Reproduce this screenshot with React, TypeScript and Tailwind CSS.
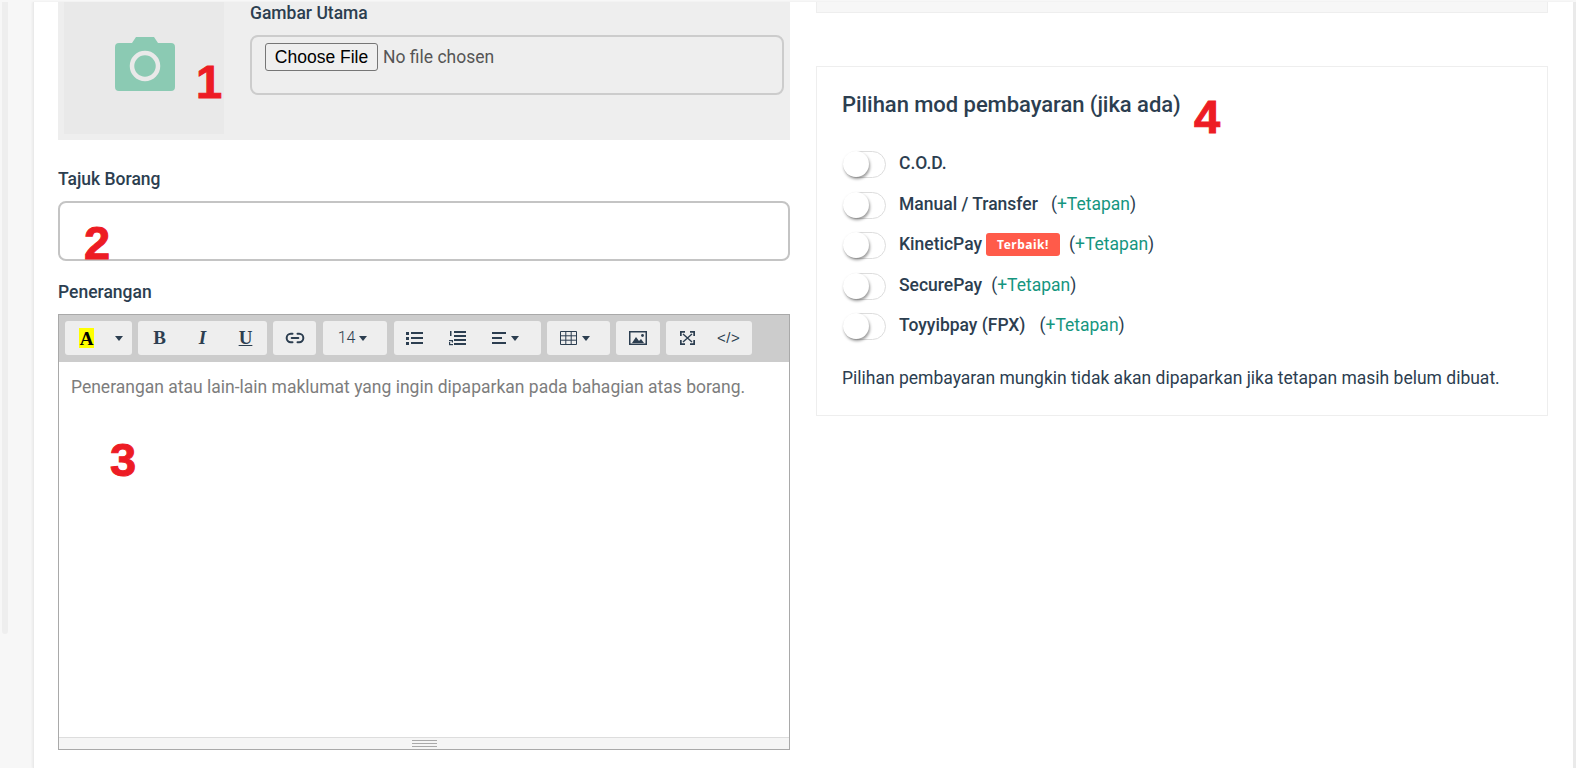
import React from "react";
import { Link2 } from "lucide-react";

const Caret = () => (
  <svg width="8" height="5" viewBox="0 0 8 5" className="shrink-0"><path d="M0 0h8L4 5z" fill="#2c3e50" /></svg>
);

const Group = ({ w, children, className = "" }: { w: string; children: React.ReactNode; className?: string }) => (
  <div className={`${w} h-[34px] bg-[#eeeeee] rounded-[3px] flex items-center ${className}`}>{children}</div>
);

const Toggle = () => (
  <div className="relative w-[43px] h-[27px] rounded-full border border-[#dddddd] bg-white shrink-0">
    <div className="absolute left-[-1px] top-[-1px] w-[26px] h-[26px] rounded-full bg-white shadow-[1px_2px_3px_rgba(0,0,0,0.4)]" />
  </div>
);

const Tetapan = () => (
  <span className="font-normal text-[#2c3e50]">(<span className="text-[#16967f]">+Tetapan</span>)</span>
);

const Num = ({ children, className }: { children: React.ReactNode; className: string }) => (
  <span className={`absolute font-['Liberation_Sans',sans-serif] font-bold text-[#ed1c24] text-[47px] leading-none [-webkit-text-stroke:1px_#ed1c24] ${className}`}>{children}</span>
);

const Row = ({ children }: { children: React.ReactNode }) => (
  <div className="flex items-center h-[27px] pl-[1px]">
    <Toggle />
    <div className="flex items-center h-[27px] pb-[2px]">{children}</div>
  </div>
);

export default function App() {
  return (
    <div className="relative h-[768px] w-[1576px] overflow-hidden bg-[#f7f7f7] pt-[2px] flex font-['Roboto',sans-serif] text-[17.5px] text-[#2c3e50]">
      <div className="w-[33px] shrink-0 pl-[2px]">
        <div className="w-[6px] h-[632px] bg-[#eeeeee] rounded-b-[3px]" />
      </div>
      <div className="w-[1540px] shrink-0 h-full bg-white border-l border-[#eaeaea] shadow-[-1px_0_2px_rgba(0,0,0,0.05)] flex pl-[24px]">
        <div className="w-[732px] shrink-0">
          <div className="h-[138px] bg-[#eeeeee] flex pl-[6px]">
            <div className="w-[160px] h-[132px] bg-[#e9e9e9] flex items-center justify-center pl-[2px]">
              <svg width="60" height="54" viewBox="0 0 60 54" className="mt-[-8px]">
                <path d="M4 6h13l4-6h18l4 6h13a4 4 0 0 1 4 4v40a4 4 0 0 1-4 4H4a4 4 0 0 1-4-4V10a4 4 0 0 1 4-4z" fill="#8bcab3" />
                <circle cx="30" cy="29" r="13" fill="#8bcab3" stroke="#e9e9e9" strokeWidth="4.5" />
              </svg>
            </div>
            <div className="ml-[26px] w-[534px]">
              <div className="h-[33px] leading-[22px] font-medium">Gambar Utama</div>
              <div className="h-[60px] border-2 border-[#cccccc] rounded-[8px] pl-[13px] pt-[6px]">
                <input
                  type="file"
                  className="text-[#555555] leading-[24px] file:font-['Liberation_Sans',sans-serif] file:text-[17.5px] file:text-black file:bg-[#efefef] file:border file:border-[#767676] file:rounded-[3px] file:h-[28px] file:w-[113px] file:mr-[5px]"
                />
              </div>
            </div>
          </div>
          <div className="mt-[28px] mb-[11px] h-[22px] leading-[22px] font-medium">Tajuk Borang</div>
          <div className="h-[60px] border-2 border-[#c4c4c4] rounded-[8px]" />
          <div className="mt-[20px] h-[22px] leading-[22px] font-medium">Penerangan</div>
          <div className="mt-[11px] h-[436px] border border-[#a9a9a9] flex flex-col">
            <div className="h-[47px] bg-[#cccccc] flex items-start pt-[6px] pl-[6px] gap-[6px] text-[#2c3e50]">
              <Group w="w-[67px]" className="pl-[14px] pr-[9px] justify-between">
                <span className="w-[15px] h-[20px] bg-[#ffff00] text-black font-['Liberation_Serif',serif] font-bold text-[19px] leading-[22px] text-center">A</span>
                <Caret />
              </Group>
              <Group w="w-[129px]" className="grid grid-cols-3 text-center font-['Liberation_Serif',serif] text-[19px]">
                <span className="font-bold">B</span>
                <span className="font-bold italic">I</span>
                <span className="font-bold underline">U</span>
              </Group>
              <Group w="w-[43px]" className="justify-center"><Link2 size={20} strokeWidth={2.4} /></Group>
              <Group w="w-[64px]" className="ml-[1px] justify-center gap-[4px] pr-[5px]"><span className="text-[16px] font-light">14</span><Caret /></Group>
              <Group w="w-[147px]" className="ml-[1px] pl-[12px]">
                <svg width="17" height="14" viewBox="0 0 17 14" fill="#2c3e50">
                  <rect x="0" y="1" width="3" height="3" /><rect x="0" y="6" width="3" height="3" /><rect x="0" y="11" width="3" height="3" />
                  <rect x="5" y="1" width="12" height="2" /><rect x="5" y="6" width="12" height="2" /><rect x="5" y="11" width="12" height="2" />
                </svg>
                <svg width="17" height="16" viewBox="0 0 17 16" fill="#2c3e50" className="ml-[26px]">
                  <rect x="5" y="1" width="12" height="2" /><rect x="5" y="5" width="12" height="2" /><rect x="5" y="9" width="12" height="2" /><rect x="5" y="13" width="12" height="2" />
                  <rect x="1" y="1" width="1.5" height="5" /><rect x="0" y="10" width="4" height="1.2" /><rect x="0" y="14" width="4" height="1.2" /><rect x="2.8" y="10" width="1.2" height="2.5" /><rect x="0" y="12" width="1.2" height="2.5" />
                </svg>
                <div className="ml-[26px] flex items-center gap-[5px]">
                  <svg width="14" height="12" viewBox="0 0 14 12" fill="#2c3e50"><rect y="0" width="14" height="2" /><rect y="5" width="10" height="2" /><rect y="10" width="14" height="2" /></svg>
                  <Caret />
                </div>
              </Group>
              <Group w="w-[63px]" className="pl-[13px] gap-[5px]">
                <svg width="17" height="14" viewBox="0 0 17 14" fill="none" stroke="#2c3e50" strokeWidth="1"><path d="M.5 .5h16v13H.5zM.5 4.8h16M.5 9.2h16M5.8 .5v13M11.2 .5v13" /></svg>
                <Caret />
              </Group>
              <Group w="w-[44px]" className="justify-center">
                <svg width="18" height="14" viewBox="0 0 18 14"><rect x=".75" y=".75" width="16.5" height="12.5" fill="none" stroke="#2c3e50" strokeWidth="1.5" /><path d="M3 12l4-6 3 4 2-2 3 4z" fill="#2c3e50" /><circle cx="13.5" cy="4.5" r="1.4" fill="#2c3e50" /></svg>
              </Group>
              <Group w="w-[86px]" className="pl-[14px] gap-[22px]">
                <svg width="15" height="14" viewBox="0 0 15 14" fill="none" stroke="#2c3e50" strokeWidth="1.4"><path d="M3 3l9 8M12 3l-9 8" /><path d="M.8 5V.8h4.2M10 .8h4.2V5M14.2 9v4.2H10M5 13.2H.8V9" strokeWidth="1.8" /></svg>
                <span className="font-['Liberation_Sans',sans-serif] text-[15px] leading-[36px] tracking-[0.5px]">&lt;/&gt;</span>
              </Group>
            </div>
            <div className="flex-1 bg-white px-[12px] pt-[14px] leading-[22px] text-[#7d7d7d]">
              Penerangan atau lain-lain maklumat yang ingin dipaparkan pada bahagian atas borang.
            </div>
            <div className="h-[12px] bg-[#f5f5f5] border-t border-[#dddddd] flex justify-center pt-[2px]">
              <div className="w-[25px] h-[7px] border-y border-[#a9a9a9] flex items-center"><div className="w-full h-px bg-[#a9a9a9]" /></div>
            </div>
          </div>
        </div>
        <div className="ml-[26px] w-[732px] shrink-0">
          <div className="h-[11px] bg-[#f7f7f7] border border-t-0 border-[#eeeeee]" />
          <div className="mt-[53px] h-[350px] border border-[#eeeeee] pl-[25px] pt-[23px]">
            <div className="text-[22px] leading-[30px] tracking-[-0.05px] font-medium">Pilihan mod pembayaran (jika ada)</div>
            <div className="mt-[31px] flex flex-col gap-[13.5px]">
              <Row><span className="ml-[13px] font-medium">C.O.D.</span></Row>
              <Row><span className="ml-[13px] font-medium">Manual / Transfer</span><span className="ml-[13px]"><Tetapan /></span></Row>
              <Row>
                <span className="ml-[13px] font-medium">KineticPay</span>
                <span className="ml-[4px] w-[74px] h-[23px] bg-[#ff5b4a] rounded-[3px] text-white font-['Noto_Sans',sans-serif] font-bold text-[12px] tracking-[0.5px] flex items-center justify-center">Terbaik!</span>
                <span className="ml-[9px]"><Tetapan /></span>
              </Row>
              <Row><span className="ml-[13px] font-medium">SecurePay</span><span className="ml-[9px]"><Tetapan /></span></Row>
              <Row><span className="ml-[13px] font-medium">Toyyibpay (FPX)</span><span className="ml-[14px]"><Tetapan /></span></Row>
            </div>
            <div className="mt-[27px] leading-[22px]">Pilihan pembayaran mungkin tidak akan dipaparkan jika tetapan masih belum dibuat.</div>
          </div>
        </div>
      </div>
      <div className="absolute right-0 top-[2px] bottom-0 w-[3px] bg-[#eaeaea]" />
      <Num className="left-[196px] top-[58px]">1</Num>
      <Num className="left-[84px] top-[219px]">2</Num>
      <Num className="left-[110px] top-[436px]">3</Num>
      <Num className="left-[1194px] top-[93px]">4</Num>
    </div>
  );
}
